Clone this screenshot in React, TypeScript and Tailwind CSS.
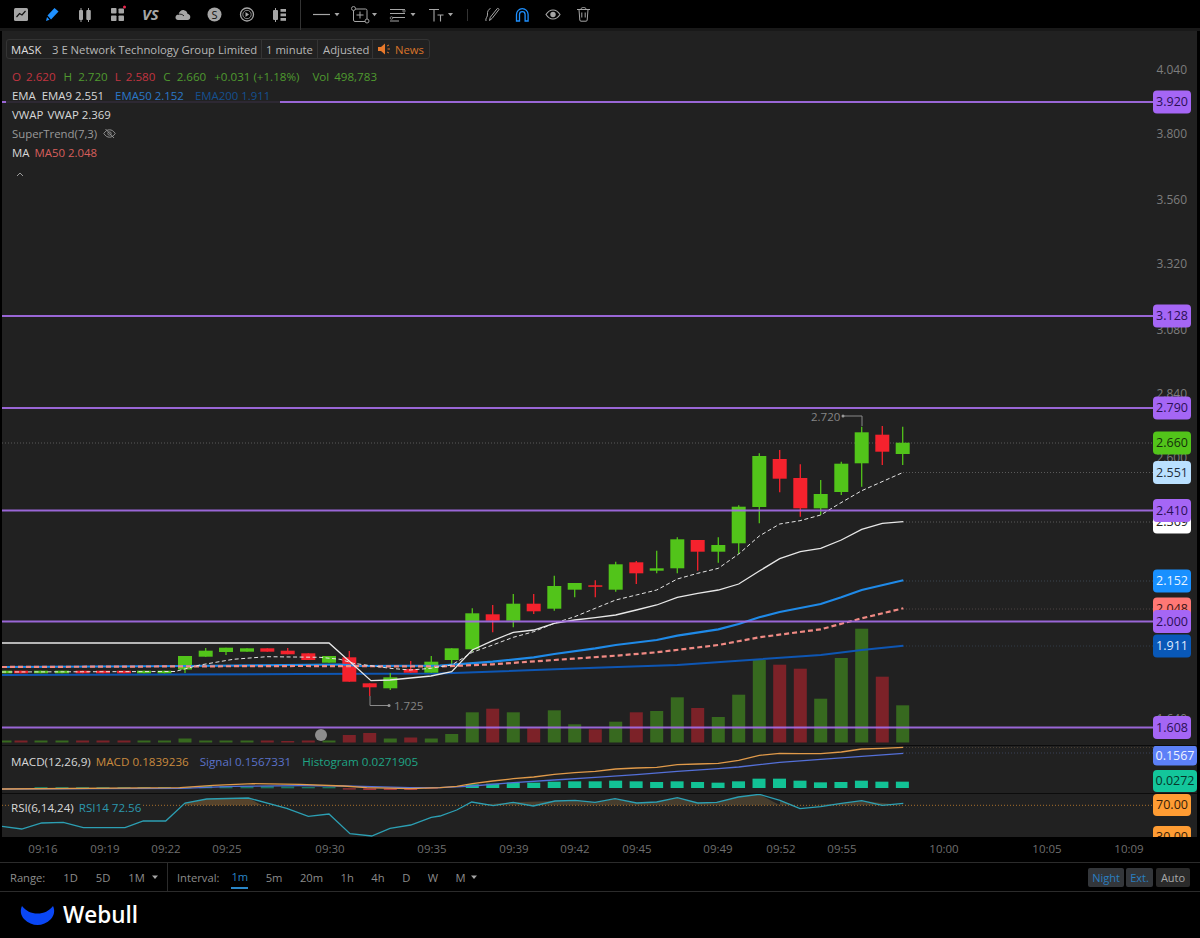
import React from "react";

type C = [number, "g" | "r", number, number, number, number];
const G = "#52c41a";
const R = "#f5222d";

const candles: C[] = [
  [5, "g", 670.7, 670.7, 673.3, 673.3],
  [21, "r", 670.7, 670.7, 673.3, 673.3],
  [41, "g", 670.7, 670.7, 673.3, 673.3],
  [62, "g", 670.7, 670.7, 673.3, 673.3],
  [82.6, "r", 670.7, 670.7, 673.3, 673.3],
  [103, "r", 670.7, 670.7, 673.3, 673.3],
  [124, "r", 670.7, 670.7, 673.3, 673.3],
  [144, "g", 670.7, 670.7, 673.3, 673.3],
  [164.5, "g", 670.7, 670.7, 673.3, 673.3],
  [185, "g", 656, 656, 669.5, 673],
  [205.7, "g", 648, 650.7, 656.7, 656.7],
  [226, "g", 647.7, 647.7, 652, 655],
  [247, "g", 648.3, 648.3, 651.7, 651.7],
  [267.3, "r", 648.3, 648.3, 651.7, 651.7],
  [287.7, "r", 648, 650.7, 654.3, 654.3],
  [308.3, "r", 653.3, 653.3, 660, 660],
  [329, "g", 656, 656, 662.7, 662.7],
  [349.3, "r", 651, 657.3, 681.7, 681.7],
  [369.7, "r", 683.3, 683.3, 687.3, 696],
  [390.3, "g", 673, 677.3, 688.3, 690],
  [410.7, "r", 661, 669, 672.7, 672.7],
  [431.3, "g", 656, 661.7, 672.7, 672.7],
  [451.7, "g", 648.3, 648.3, 660, 665],
  [472.3, "g", 608.3, 613.3, 649.3, 651.7],
  [492.7, "r", 605, 614.3, 620.7, 632.3],
  [513.3, "g", 594, 603.7, 620.7, 627.3],
  [533.7, "r", 594, 603.7, 611.3, 614],
  [554.3, "g", 575.7, 586, 608.7, 610.7],
  [574.7, "g", 583, 583, 589.7, 597.3],
  [595.3, "r", 580.3, 585.3, 586.7, 597.3],
  [615.7, "g", 561.7, 564.3, 589.7, 591.7],
  [636.3, "r", 561, 562.3, 573.3, 584],
  [656.7, "g", 550.7, 568.3, 570.7, 573.3],
  [677.3, "g", 537.3, 539.3, 568.3, 573.3],
  [697.7, "r", 540, 540, 551.7, 570.7],
  [718.3, "g", 537.3, 545, 551.7, 562.7],
  [738.7, "g", 505.3, 506.7, 543.3, 554],
  [759.3, "g", 453.3, 456, 507, 523.3],
  [779.7, "r", 450, 459, 478.7, 492.3],
  [800.3, "r", 464.3, 478, 508.3, 516.7],
  [820.7, "g", 480, 494, 508.3, 515],
  [841.3, "g", 461.7, 463.7, 492, 495],
  [861.7, "g", 426.7, 432.3, 463.3, 486.7],
  [882.3, "r", 426, 434.7, 451.7, 465],
  [902.7, "g", 426.7, 442.7, 454, 465],
];

const volTops: number[] = [
  740.5, 740.5, 740.5, 740.5, 740.5, 740.5, 740.5, 740.5, 740.5, 738.5, 740.5, 740.5, 740.5, 740.5, 741, 740.5, 740.5,
  735, 733, 738.5, 737.5, 738.5, 734, 712.3, 708.7, 712.3, 728.3, 710.3, 724.3, 729.3, 721.7, 712.3, 711, 697.3, 708,
  717, 694.7, 660, 664.7, 668.7, 698.7, 658, 628.7, 676.7, 705.3,
];

const z3 = (p: number[][]) => p.map(([x, y]) => [440 + x / 3, 400 + y / 3]);
const z2 = (p: number[][]) => p.map(([x, y]) => [x / 3, 600 + y / 3]);
const z11 = (p: number[][]) => p.map(([x, y]) => [440 + x / 3, 742 + y / 3]);
const str = (p: number[][]) => p.map(([x, y]) => `${x.toFixed(1)},${y.toFixed(1)}`).join(" ");

const ema9 = str([
  [2, 672],
  [175, 671.5],
  ...z2([[600, 195], [700, 178], [800, 170], [960, 172], [1020, 178], [1060, 190], [1170, 205], [1230, 210], [1294, 205]]),
  ...z3([[0, 800], [35, 795], [97, 757], [158, 735], [220, 712], [281, 695], [343, 670], [404, 650], [466, 625], [527, 600], [589, 585], [650, 570], [712, 537], [773, 520], [835, 505], [896, 462], [958, 408], [1019, 372], [1080, 362], [1142, 345], [1200, 310], [1265, 272], [1390, 217]]),
]);
const vwap = str([
  [2, 643],
  [329, 643],
  [371, 680.7],
  [390, 680],
  [431, 676],
  [451.7, 671.7],
  ...z3([[97, 750], [158, 722], [220, 697], [281, 690], [343, 670], [404, 660], [466, 653], [527, 645], [589, 630], [650, 615], [712, 592], [773, 580], [835, 570], [896, 552], [958, 513], [1019, 476], [1081, 455], [1142, 445], [1204, 420], [1265, 388], [1327, 370], [1390, 365]]),
]);
const ema50 = str([
  [2, 667],
  [185, 666],
  [340, 664.5],
  [360, 666],
  [440, 665.7],
  ...z3([[158, 785], [281, 772], [343, 762], [466, 745], [527, 735], [650, 720], [712, 707], [835, 688], [896, 672], [958, 652], [1019, 636], [1142, 612], [1204, 592], [1265, 570], [1390, 541]]),
]);
const ma50 = str([
  [2, 667],
  [300, 666],
  [440, 666.5],
  ...z3([[158, 793], [343, 780], [527, 767], [650, 757], [835, 735], [958, 712], [1142, 688], [1265, 655], [1390, 625]]),
]);
const ema200 = str([
  [2, 675],
  [300, 674],
  [440, 673.5],
  ...z3([[466, 803], [712, 795], [896, 782], [1142, 765], [1265, 750], [1390, 737]]),
]);

const macdO = str([
  ...z2([[6, 567], [540, 563], [640, 556], [760, 551], [900, 553], [1030, 558], [1100, 563], [1230, 566], [1320, 563]]),
  ...z11([[50, 133], [97, 125], [158, 117], [220, 110], [281, 105], [343, 97], [404, 92], [466, 88], [527, 81], [589, 78], [650, 76], [712, 68], [773, 66], [835, 64], [896, 55], [958, 40], [1019, 34], [1081, 35], [1142, 35], [1204, 30], [1265, 21], [1327, 19], [1390, 16]]),
]);
const macdB = str([
  ...z2([[6, 567], [300, 566], [540, 565], [700, 559], [900, 557], [1030, 558], [1230, 563], [1320, 563]]),
  ...z11([[97, 132], [220, 122], [343, 114], [466, 106], [589, 98], [712, 88], [835, 80], [896, 75], [958, 68], [1019, 61], [1142, 52], [1265, 43], [1390, 34]]),
]);
const histLeft: [number, number][] = [[41, 787], [62, 787], [82.6, 787], [103, 787], [124, 787], [144, 787], [164.5, 787], [185, 787], [205.7, 786], [226, 786], [247, 786], [267.3, 786], [287.7, 786.5], [308.3, 787], [329, 787]];
const histRed: [number, number][] = [[349.3, 789.5], [369.7, 790], [390.3, 790], [410.7, 790], [431.3, 789]];
const histTops = [127, 125, 122, 122, 119, 118, 118, 116, 118, 120, 118, 120, 122, 118, 110, 110, 116, 121, 120, 116, 119, 119];

const rsiPts = [
  ...z2([[5, 682], [65, 690], [125, 672], [190, 670], [250, 686], [375, 686], [430, 666], [497, 666], [555, 612], [620, 600], [745, 597], [860, 628], [925, 652], [987, 645], [1050, 704], [1115, 711], [1170, 688], [1232, 678], [1294, 655]]),
  ...z11([[0, 225], [50, 207], [95, 183], [160, 194], [220, 184], [280, 195], [345, 180], [405, 178], [465, 184], [525, 173], [590, 186], [650, 183], [712, 170], [773, 186], [830, 184], [895, 168], [958, 160], [1020, 178], [1080, 203], [1142, 197], [1204, 187], [1265, 179], [1327, 193], [1390, 187]]),
];
const rsi = str(rsiPts);

const axis: [string, number][] = [["4.040", 70], ["3.800", 134], ["3.560", 200], ["3.320", 264], ["3.080", 330], ["2.840", 394], ["2.600", 458], ["2.360", 522], ["2.120", 588], ["1.880", 650], ["1.640", 719]];
const dots: [number, number, string][] = [[2, 443, "#5a5a5a"], [903, 472.5, "#5a5a5a"], [903, 522, "#5a5a5a"], [903, 581, "#3c4650"], [903, 609, "#4e4444"], [903, 646, "#333c48"]];
const tags: [string, number, string, string][] = [
  ["2.660", 443, "#52c41a", "#14300a"],
  ["2.551", 472.5, "#bae0ff", "#1f2d3a"],
  ["2.369", 522, "#ffffff", "#222222"],
  ["2.152", 581, "#1890ff", "#e8f4ff"],
  ["2.048", 609, "#ff7875", "#3a1414"],
  ["1.911", 646, "#0958b8", "#dfeaff"],
];
const purple: [string, number][] = [["3.920", 102], ["3.128", 316], ["2.790", 408], ["2.410", 510.5], ["2.000", 621.5], ["1.608", 727.5]];
const times: [string, number][] = [["09:16", 43], ["09:19", 105], ["09:22", 166], ["09:25", 227], ["09:30", 330], ["09:35", 432], ["09:39", 514], ["09:42", 575], ["09:45", 637], ["09:49", 718], ["09:52", 781], ["09:55", 842], ["10:00", 944], ["10:05", 1047], ["10:09", 1129]];

const Tag = ({ t, y, bg, fg, w = 38, h = 23 }: { t: string; y: number; bg: string; fg: string; w?: number; h?: number }) => (
  <g>
    <rect x={1153} y={y - h / 2} width={w} height={h} rx={4} fill={bg} />
    <text x={1153 + w / 2} y={y + 4.3} textAnchor="middle" fontSize={12.5} fill={fg}>{t}</text>
  </g>
);

const I = "#a6a6a6";
const Caret = () => (
  <svg width="6" height="4" viewBox="0 0 6 4" className="ml-[5px]"><path d="M0 0.5h6L3 4z" fill={I} /></svg>
);

const Toolbar = () => (
  <div className="flex h-[28px] w-[600px] items-center">
    <div className="relative -mb-[2px] flex h-[30px] w-[301px] items-center border-r border-[#333]">
      <svg width="300" height="30" viewBox="0 0 300 30" className="block">
        <rect x="14" y="8" width="14" height="13" rx="1.5" fill={I} />
        <path d="M16.5 17l3-3.5 2.5 1.5 3.5-4" fill="none" stroke="#111" strokeWidth="1.2" />
        <path d="M47.5 15.5l7-7.500 4 3.500-7.500 8z" fill="#1e90ff" />
        <path d="M47 17l-1 4 3.500-1.200z" fill="#1e90ff" />
        <path d="M81 8v14M88.500 8v14" stroke={I} strokeWidth="1" />
        <rect x="79" y="10" width="4" height="10" rx="1" fill={I} />
        <rect x="86.300" y="10" width="4.500" height="10" rx="1" fill={I} />
        <rect x="111" y="8" width="5.500" height="5.500" rx="0.800" fill={I} />
        <rect x="118.500" y="8.500" width="5.500" height="5" rx="0.800" fill={I} />
        <rect x="111" y="15.500" width="5.500" height="5.500" rx="0.800" fill={I} />
        <rect x="118.500" y="15.500" width="5.500" height="5.500" rx="0.800" fill={I} />
        <circle cx="124.500" cy="7" r="1.500" fill="#e8264d" />
        <path d="M175.500 17.500c0-2 1.500-3 3-3 .8-3 3-4.800 5.500-4.300 2.200.4 3.300 2 3.500 3.600 1.800.3 2.800 1.700 2.800 3.200 0 1.800-1.200 3-2.800 3h-9.500c-1.500 0-2.500-1-2.500-2.500z" fill={I} />
        <path d="M178 14.500c2-.8 4.500-.3 6 1.500" fill="none" stroke="#000" strokeWidth="0.800" />
        <circle cx="214.500" cy="14.500" r="7" fill={I} />
        <text x="214.500" y="18.500" textAnchor="middle" fontSize="11" fill="#111">S</text>
        <circle cx="247" cy="14.500" r="6.500" fill="none" stroke={I} strokeWidth="1.300" />
        <circle cx="247" cy="14.500" r="4.200" fill="none" stroke={I} strokeWidth="0.800" />
        <path d="M245.500 12l3.500 2.500-3.500 2.500z" fill={I} />
        <path d="M275.500 8v14" stroke={I} strokeWidth="1" />
        <rect x="273" y="10" width="5" height="10" rx="1" fill={I} />
        <rect x="280.500" y="9" width="5.500" height="2.800" fill={I} />
        <rect x="280.500" y="13.500" width="5.500" height="2.800" fill={I} />
        <rect x="280.500" y="18" width="5.500" height="2.800" fill={I} />
      </svg>
      <span className="absolute left-[142px] top-[4px] text-[15px] font-bold italic leading-[20px] text-[#a6a6a6]">VS</span>
    </div>
    <div className="-mb-[2px] h-[30px]">
      <svg width="299" height="30" viewBox="301 0 299 30" className="block">
        <path d="M313 14.500h17" stroke={I} strokeWidth="1.200" />
        <path d="M334.500 13h5l-2.500 3.200z" fill={I} />
        <rect x="353.500" y="9" width="13.500" height="12.500" rx="1.500" fill="none" stroke={I} strokeWidth="1" />
        <circle cx="353.500" cy="8.500" r="2" fill="#000" stroke={I} strokeWidth="0.900" />
        <circle cx="367" cy="21" r="2" fill="#000" stroke={I} strokeWidth="0.900" />
        <path d="M360 11.500v7M356.500 15h7" stroke={I} strokeWidth="1" />
        <path d="M372 13h5l-2.500 3.200z" fill={I} />
        <path d="M390 9.500h15M390 13.500h15M392 17.500h13M390 21h9" stroke={I} strokeWidth="1" />
        <circle cx="391.500" cy="18" r="1.300" fill="#000" stroke={I} strokeWidth="0.700" />
        <circle cx="404" cy="11" r="1.200" fill="#000" stroke={I} strokeWidth="0.700" />
        <path d="M410.500 13h5l-2.500 3.200z" fill={I} />
        <path d="M429 9.500h10M434 9.500v12M437.500 15h6M440.500 15v6.500" stroke={I} strokeWidth="1.100" fill="none" />
        <path d="M448 13h5l-2.500 3.200z" fill={I} />
        <path d="M467.500 9v12" stroke="#333" strokeWidth="1" />
        <path d="M486 21c-1-3 2-4 1.500-7-.4-2 1-5 3-5.500M499 9.500l-7 9-2.500 2 .8-3.200 7-8.800c.6-.4 1.800.4 1.700 1z" fill="none" stroke={I} strokeWidth="1" />
        <path d="M516.500 21v-6.500a5.800 5.800 0 0 1 11.600 0V21h-3v-6.500a2.800 2.800 0 0 0-5.600 0V21z" fill="none" stroke="#1e90ff" strokeWidth="1.300" />
        <path d="M546 14.500c2-3.200 4.500-4.500 7-4.500s5 1.300 7 4.500c-2 3.200-4.500 4.500-7 4.500s-5-1.300-7-4.500z" fill="none" stroke={I} strokeWidth="1.100" />
        <circle cx="553" cy="14.500" r="2.700" fill={I} />
        <path d="M577 9.500h13M579 9.500l.8 10.500c0 .8.500 1.200 1.200 1.200h5c.7 0 1.200-.4 1.200-1.200l.8-10.500M581 9c0-2 5-2 5 0M581.800 12.500v5M585.200 12.500v5" fill="none" stroke={I} strokeWidth="1" />
      </svg>
    </div>
  </div>
);

const MainChart = () => (
  <svg width="1195" height="714" viewBox="2 31 1195 714" className="block">
    {axis.map(([t, y]) => (
      <text key={t} x={1187} y={y + 4} textAnchor="end" fontSize={12} fill="#7d7d7d">{t}</text>
    ))}
    {dots.map(([x, y, c]) => (
      <line key={y} x1={x} x2={1153} y1={y} y2={y} stroke={c} strokeDasharray="1 2" />
    ))}
    {candles.map(([x, k], i) => (
      <rect key={x} x={x - 6.5} y={volTops[i]} width={13} height={742.5 - volTops[i]} fill={k === "g" ? "#37691f" : "#7c2228"} />
    ))}
    <polyline points={ema200} fill="none" stroke="#0e56b3" strokeWidth={2} />
    {candles.map(([x, k, wt, bt, bb, wb]) => {
      const c = k === "g" ? G : R;
      return (
        <g key={x}>
          <line x1={x} x2={x} y1={wt} y2={wb} stroke={c} strokeWidth={1.3} />
          <rect x={x - 7} y={bt} width={14} height={Math.max(bb - bt, 1.5)} fill={c} />
        </g>
      );
    })}
    <polyline points={ema50} fill="none" stroke="#1f8ae8" strokeWidth={2.2} />
    <polyline points={ma50} fill="none" stroke="#f08a84" strokeWidth={2.2} strokeDasharray="5 3" />
    <polyline points={ema9} fill="none" stroke="#e4e4e4" strokeWidth={1} strokeDasharray="4 2.5" />
    <polyline points={vwap} fill="none" stroke="#e8e8e8" strokeWidth={1.3} />
    <path d="M370 696v9.500h19" fill="none" stroke="#8a8a8a" strokeWidth={1} />
    <circle cx={389} cy={705.5} r={1.5} fill="#9a9a9a" />
    <text x={394} y={710} fontSize={11.5} fill="#858585">1.725</text>
    <path d="M843 416h19v10" fill="none" stroke="#8a8a8a" strokeWidth={1} />
    <circle cx={843} cy={416} r={1.5} fill="#9a9a9a" />
    <text x={811} y={421} fontSize={11.5} fill="#858585">2.720</text>
    <circle cx={321} cy={735} r={6} fill="#8d8d8d" />
    {tags.map(([t, y, bg, fg]) => (
      <Tag key={t} t={t} y={y} bg={bg} fg={fg} />
    ))}
    {purple.map(([, y]) => (
      <line key={y} x1={2} x2={1153} y1={y} y2={y} stroke="#a46ce6" strokeOpacity={0.92} strokeWidth={2} />
    ))}
    {purple.map(([t, y]) => (
      <Tag key={t} t={t} y={y} bg="#a566f5" fg="#2a0f55" />
    ))}
  </svg>
);

const MacdChart = () => (
  <svg width="1195" height="47" viewBox="2 746 1195 47" className="block">
    {histLeft.map(([x, t]) => (
      <rect key={x} x={x - 6.5} y={t} width={13} height={788.3 - t} fill="#12b28c" opacity={0.6} />
    ))}
    {histRed.map(([x, b]) => (
      <rect key={x} x={x - 6.5} y={788.3} width={13} height={b - 788.3} fill="#a5323a" />
    ))}
    {histTops.map((t, i) => (
      <rect key={i} x={472.3 + 20.48 * i - 6.5} y={742 + t / 3} width={13} height={788 - (742 + t / 3)} fill="#12c295" />
    ))}
    <polyline points={macdB} fill="none" stroke="#5470d8" strokeWidth={1.3} />
    <polyline points={macdO} fill="none" stroke="#e09a4a" strokeWidth={1.3} />
    <line x1={903} x2={1153} y1={747.5} y2={747.5} stroke="#4a4034" strokeDasharray="1 2" />
    <line x1={903} x2={1153} y1={753} y2={753} stroke="#3a4258" strokeDasharray="1 2" />
    <Tag t="0.1567" y={755.5} bg="#5c80f7" fg="#eef2ff" w={44} h={20} />
    <Tag t="0.0272" y={781} bg="#13c69b" fg="#06352a" w={44} h={22} />
  </svg>
);

const RsiChart = () => {
  const above = rsiPts.filter(([, y]) => y <= 806.3);
  return (
    <svg width="1195" height="43" viewBox="2 795 1195 43" className="block">
      <polygon points={`185,806.3 ${str(above.filter(([x]) => x >= 185 && x <= 260))} 262,806.3`} fill="#55432c" />
      <polygon points={`472,806.3 ${str(above.filter(([x]) => x >= 472 && x < 780))} 780,806.3`} fill="#463d2e" />
      <polygon points={`780,806.3 ${str(above.filter(([x]) => x >= 780 && x < 795))} 795,806.3`} fill="#463d2e" />
      <polygon points={`811,806.3 ${str(above.filter(([x]) => x >= 811 && x <= 903))} 903,806.3`} fill="#463d2e" />
      <line x1={2} x2={1153} y1={806.3} y2={806.3} stroke="#a8702c" strokeDasharray="1 2" />
      <polyline points={rsi} fill="none" stroke="#2c9fb3" strokeWidth={1.3} />
      <Tag t="70.00" y={806} bg="#ff9c33" fg="#33200a" h={22} />
      <Tag t="30.00" y={838} bg="#ff9c33" fg="#33200a" h={22} />
    </svg>
  );
};

export default function App() {
  return (
    <div className="flex h-[938px] w-[1200px] flex-col overflow-hidden whitespace-nowrap bg-black font-['Open_Sans','Noto_Sans',sans-serif] text-[11.4px] leading-[19px] text-[#d8d8d8]">
      <Toolbar />
      <div className="h-[3px] bg-[#191919]" />
      <div className="ml-[2px] mr-[3px] flex h-[806px] flex-col bg-[#212121]">
        <div className="relative h-[714px]">
          <MainChart />
          <div className="absolute left-[4px] top-[8px] flex flex-col items-start">
            <div className="flex h-[20px] items-center rounded-[3px] border border-[#343434] text-[11.3px] text-[#b8b8b8]">
              <span className="ml-[4px] w-[41px] text-[#dedede]">MASK</span>
              <span className="w-[210px] border-r border-[#343434]">3 E Network Technology Group Limited</span>
              <span className="w-[56px] border-r border-[#343434] pl-[4px]">1 minute</span>
              <span className="w-[55px] border-r border-[#343434] pl-[5px]">Adjusted</span>
              <svg width="13" height="12" viewBox="0 0 13 12" className="ml-[5px]">
                <path d="M0 4h3l4-3.500v11L3 8H0z" fill="#e8792b" />
                <path d="M9 3l2-1M9.500 6h2.500M9 9l2 1" stroke="#e8792b" strokeWidth="0.900" />
              </svg>
              <span className="ml-[4px] mr-[5px] text-[#d9742a]">News</span>
            </div>
            <div className="mt-[8px] flex h-[19px] items-center pl-[6px] text-[11.6px] text-[#4f9a2f]">
              <span className="text-[#c23440]">O</span>
              <span className="ml-[5px] text-[#c23440]">2.620</span>
              <span className="ml-[8px]">H</span>
              <span className="ml-[6px]">2.720</span>
              <span className="ml-[7px] text-[#c23440]">L</span>
              <span className="ml-[5px] text-[#c23440]">2.580</span>
              <span className="ml-[8px]">C</span>
              <span className="ml-[6px]">2.660</span>
              <span className="ml-[8px]">+0.031 (+1.18%)</span>
              <span className="ml-[13px]">Vol</span>
              <span className="ml-[5px]">498,783</span>
            </div>
            <div className="flex h-[19px] items-center bg-[#212121]/90 pl-[6px] pr-[10px]">
              <span>EMA</span>
              <span className="ml-[6px]">EMA9 2.551</span>
              <span className="ml-[11px] text-[#2b78c8]">EMA50 2.152</span>
              <span className="ml-[11px] text-[#15508f]">EMA200 1.911</span>
            </div>
            <div className="flex h-[19px] items-center pl-[6px]">
              <span>VWAP</span>
              <span className="ml-[4px]">VWAP 2.369</span>
            </div>
            <div className="flex h-[19px] items-center pl-[6px] text-[#9a9a9a]">
              <span>SuperTrend(7,3)</span>
              <svg width="13" height="11" viewBox="0 0 13 11" className="ml-[6px]">
                <path d="M.8 5.500C2.500 2.800 4.500 1.800 6.500 1.800s4 1 5.700 3.700c-1.700 2.700-3.700 3.700-5.700 3.700S2.500 8.200.8 5.500z" fill="none" stroke="#9a9a9a" strokeWidth="0.900" />
                <circle cx="6.500" cy="5.500" r="1.700" fill="none" stroke="#9a9a9a" strokeWidth="0.800" />
                <path d="M2.500 1l8.500 9" stroke="#9a9a9a" strokeWidth="0.900" />
              </svg>
            </div>
            <div className="flex h-[19px] items-center pl-[6px]">
              <span>MA</span>
              <span className="ml-[5px] text-[#d85f5c]">MA50 2.048</span>
            </div>
            <svg width="8" height="5" viewBox="0 0 8 5" className="ml-[10px] mt-[10px]">
              <path d="M1 4l3-3 3 3" fill="none" stroke="#9a9a9a" strokeWidth="1" />
            </svg>
          </div>
        </div>
        <div className="h-[1px] bg-[#0c0c0c]" />
        <div className="relative h-[47px]">
          <MacdChart />
          <div className="absolute left-[9px] top-[6px] flex h-[19px] items-center text-[11.65px]">
            <span>MACD(12,26,9)</span>
            <span className="ml-[5px] text-[#c98a3e]">MACD 0.1839236</span>
            <span className="ml-[11px] text-[#5a72c9]">Signal 0.1567331</span>
            <span className="ml-[11px] text-[#1fa585]">Histogram 0.0271905</span>
          </div>
        </div>
        <div className="h-[1px] bg-[#0c0c0c]" />
        <div className="relative h-[43px]">
          <RsiChart />
          <div className="absolute left-[9px] top-[4px] flex h-[19px] items-center bg-[#212121] pr-[1px] text-[11.6px]">
            <span>RSI(6,14,24)</span>
            <span className="ml-[5px] text-[#2c98ad]">RSI14 72.56</span>
          </div>
        </div>
      </div>
      <div className="h-[26px] border-b border-[#2b2b2b]">
        <svg width="1200" height="25" viewBox="0 837 1200 25" className="block">
          {times.map(([t, x]) => (
            <text key={t} x={x} y={853} textAnchor="middle" fontSize={11.5} fill="#6f6f6f">{t}</text>
          ))}
        </svg>
      </div>
      <div className="flex h-[29px] items-center border-b border-[#2b2b2b] pr-[10px] text-[11.2px] text-[#8c8c8c]">
        <div className="flex h-full w-[168px] items-center border-r border-[#2b2b2b] pl-[10px]">
          <span>Range:</span>
          <span className="ml-[18px]">1D</span>
          <span className="ml-[18px]">5D</span>
          <span className="ml-[18px]">1M</span>
          <svg width="6" height="4" viewBox="0 0 6 4" className="ml-[7px]"><path d="M0 .5h6L3 4z" fill="#a6a6a6" /></svg>
        </div>
        <span className="ml-[9px]">Interval:</span>
        <div className="ml-[12px] flex h-full items-center gap-[17.5px]">
          <span className="mb-[2px] flex h-[26px] items-center border-b-2 border-[#2a86c8] pt-[2px] text-[#2a86c8]">1m</span>
          <span>5m</span>
          <span>20m</span>
          <span>1h</span>
          <span>4h</span>
          <span>D</span>
          <span>W</span>
          <span className="flex items-center">M<Caret /></span>
        </div>
        <div className="ml-auto flex h-[19px] items-center gap-[2px] text-[11px]">
          <span className="flex h-full w-[36px] items-center justify-center rounded-[2px] bg-[#33363a] text-[#2a7fc0]">Night</span>
          <span className="flex h-full w-[27px] items-center justify-center rounded-[2px] bg-[#33363a] text-[#2a7fc0]">Ext.</span>
          <span className="ml-[1px] flex h-full w-[34px] items-center justify-center rounded-[2px] bg-[#2a2a2a] text-[#a8a8a8]">Auto</span>
        </div>
      </div>
      <div className="flex flex-1 items-center pl-[21px]">
        <svg width="33" height="19" viewBox="0 0 33 19" className="overflow-visible">
          <path d="M1 0C5 5 10 7.500 16.500 7.500S28 5 32 0C34 4 33.500 9 30 13C26 17 21 19 16.500 19S7 17 3 13C-.5 9-1 4 1 0Z" fill="#0a47f5" />
        </svg>
        <span className="ml-[9px] text-[22.5px] font-semibold leading-[30px] text-white">Webull</span>
      </div>
    </div>
  );
}
